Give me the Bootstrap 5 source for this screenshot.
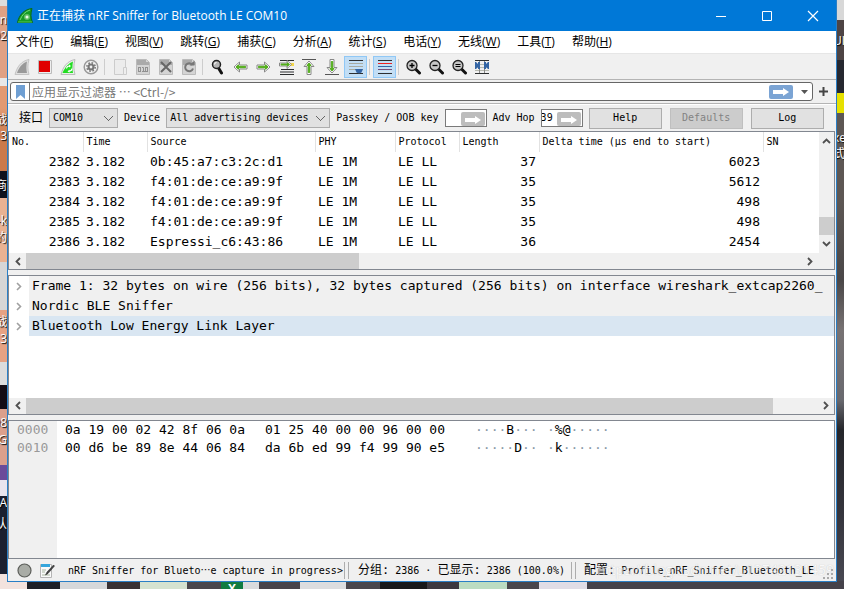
<!DOCTYPE html>
<html lang="zh-CN">
<head>
<meta charset="utf-8">
<meta name="viewport" content="width=device-width, initial-scale=1">
<title>nRF Sniffer for Bluetooth LE COM10</title>
<link href="https://cdn.jsdelivr.net/npm/bootstrap@5.3.0/dist/css/bootstrap.min.css" rel="stylesheet">
<style>
:root { --ui: "Open Sans", "Noto Sans CJK SC", sans-serif; --form: "DejaVu Sans Mono", "Noto Sans CJK SC", monospace; }
body { font-family: var(--ui); font-size: 12px; line-height: 16px; color: #000; overflow: hidden;
  background:
    linear-gradient(90deg, #f3e3de 0 27px, #1e2027 27px 60px, #d6d8da 60px 107px, #393133 107px 140px, #d5e2d0 140px 187px, #4a464c 187px 221px, #107c41 221px 243px, #dadbdd 243px 259px, #48434a 259px 300px, #dcdddf 300px 346px, #4a464c 346px 380px, #17181a 380px 427px, #3c383f 427px 459px, #bcdcc2 459px 507px, #4a464c 507px 539px, #e0dde6 539px 587px, #45424a 587px) bottom / 100% 8px no-repeat,
    linear-gradient(#d8d8d8 0 20px, #4d4444 20px 60px, #262830 60px 93px, #e6e000 93px 113px, #5d5754 113px 200px, #4a4748 280px, #777273 330px, #69696f 400px, #25262b 430px, #34343c 510px, #4a4a54) right / 8px 100% no-repeat,
    linear-gradient(#dddddd 0 6px, #e0a184 6px 78px, #e8e8e8 78px 86px, #e29a72 86px 108px, #cb7a4a 140px 171px, #10121c 171px 198px, #e9b292 198px 262px, #d6d6d6 262px 310px, #e6a283 310px 362px, #dcdcdc 362px 385px, #140c14 385px 409px, #dba08c 409px 465px, #6b4b9a 465px 480px, #e9e5ee 480px 496px, #1b2030 496px 574px, #f3e3de 574px) left / 8px 100% no-repeat, #444; }
.app-window { margin: 0 7px 7px 7px; border: 1px solid #2a7fc6; border-top: 0; background: #f0f0f0; height: calc(100vh - 7px); }
.edge-label { position: absolute; color: #fff; text-shadow: 1px 1px 1px #000; white-space: nowrap; font-size: 12px; }
.edge-left, .edge-right { position: absolute; top: 0; bottom: 0; width: 7px; overflow: hidden; }
.edge-left { left: 0; } .edge-right { right: 0; }
.edge-left .edge-label { right: 0; } .edge-right .edge-label { left: -4px; }
.edge-bottom { position: absolute; left: 221px; bottom: 0; width: 22px; height: 7px; overflow: hidden; color: #fff; font-weight: 700; line-height: 14px; text-align: center; }
button, select, input { font-family: inherit; color: inherit; }
button { background: none; border: 0; padding: 0; }
.title-bar { background: #0078d7; color: #fff; height: 31px; padding-left: 9px; }
.caption-btn { width: 46px; height: 31px; }
.menu-bar { background: #fff; height: 23px; border-bottom: 1px solid #e6e6e6; gap: 1px; }
.menu-bar a { color: #000; text-decoration: none; padding: 0 8px; white-space: nowrap; }
.tool-bar { height: 26px; padding-left: 2px; border-bottom: 1px solid #b4b4b4; }
.tool-btn { width: 23px; height: 22px; display: flex; align-items: center; justify-content: center; flex: none; }
.tool-btn.pressed { background: #c2def5; border: 1px solid #90c8f6; }
.tool-sep { width: 6px; height: 16px; flex: none; background: linear-gradient(#cdcdcd, #cdcdcd) 2px 0 / 1px 100% no-repeat; }
.filter-row { height: 24px; border-bottom: 1px solid #b4b4b4; padding: 0 8px 0 2px; gap: 2px; }
.filter-box { border: 1px solid #666; border-radius: 3px; background: #fff; height: 19px; }
.bookmark { width: 19px; border-right: 1px solid #777; }
.filter-box input { border: 0; outline: 0; background: none; font-family: "Noto Sans CJK SC", sans-serif; font-size: 12px; padding: 0 2px; height: 17px; min-width: 0; }
.filter-box input::placeholder { color: #777; opacity: 1; }
.iface-row { height: 27px; padding: 0 11px 0 11px; gap: 6px; font-family: var(--form); font-size: 10px; white-space: nowrap; border-top: 1px solid #fff; }
.iface-row .zh { font-size: 12px; }
.iface-row select { appearance: none; height: 20px; border: 1px solid #adadad; border-radius: 0; padding: 0 16px 1px 3px; font-size: 10px;
  background: linear-gradient(45deg, transparent 45%, #666 45% 58%, transparent 58%) right 8px center / 5px 5px no-repeat, linear-gradient(-45deg, transparent 45%, #666 45% 58%, transparent 58%) right 4px center / 5px 5px no-repeat, #e1e1e1; }
.sel-port { width: 69px; } .sel-dev { width: 164px; }
.key-box { width: 42px; height: 18px; border: 1px solid #7a7a7a; background: #fff; }
.key-box input { width: 14px; flex: 1; min-width: 0; border: 0; padding: 0; height: 16px; font-size: 10px; direction: rtl; }
.cmd-btn { width: 73px; height: 21px; border: 1px solid #adadad; background: #e1e1e1; }
.cmd-btn:disabled { background: #ccc; border-color: #bfbfbf; color: #838383; }
.pane { border: 1px solid #828790; background: #fff; margin-right: 1px; min-height: 0; font-family: "DejaVu Sans Mono", monospace; font-size: 13px; }
.pane-fill { flex: 1 1 0; }
.packet-list { table-layout: fixed; width: 100%; white-space: nowrap; }
.packet-list th { font-size: 10px; font-weight: 400; height: 20px; line-height: 20px; padding: 0 3px; border-right: 1px solid #e2e2e2; }
.packet-list th:last-child { border-right: 0; }
.packet-list td { height: 20px; line-height: 20px; padding: 0 3px; }
.c-no { width: 74px; } .c-64 { width: 64px; } .c-src { width: 168px; } .c-80 { width: 80px; } .c-delta { width: 224px; }
.packet-body { padding-bottom: 1px; }
.v-scroll { width: 15px; background: #f0f0f0; }
.h-scroll { height: 16px; background: #f0f0f0; }
.h-scroll button, .v-scroll button { width: 17px; height: 16px; display: flex; align-items: center; justify-content: center; flex: none; }
.v-scroll button { width: 15px; height: 18px; }
.thumb { background: #cdcdcd; }
.v-thumb { height: 18px; }
.split-gap { height: 5px; flex: none; }
.tree-row { height: 20px; line-height: 20px; white-space: pre; }
.tree-row button { width: 20px; flex: none; }
.tree-label { background: #f0f0f0; padding-left: 3px; overflow: hidden; }
.tree-row.current .tree-label { background: #d9e6f2; }
.hex-dump { white-space: pre; height: 100%; }
.hex-dump td, .hex-dump th { height: 18px; line-height: 18px; padding: 0; font-weight: 400; }
.hex-dump th { width: 48px; padding-left: 8px; background: #f0f0f0; color: #999; }
.hex-a { width: 208px; } .hex-dump td.hex-first { padding-left: 8px; } .hex-b { width: 210px; } .hex-c { width: 72px; }
.dot { color: #8a9aa8; }
.status-bar { height: 22px; font-family: var(--form); font-size: 10px; white-space: nowrap; padding-left: 9px; }
.status-bar .zh { font-size: 12px; }
.status-bar .wide-dots { font-family: "Noto Sans CJK SC", sans-serif; }
.status-msg { width: 278px; margin-left: 13px; margin-right: -2px; overflow: hidden; }
.status-sep { width: 5px; height: 17px; border: solid #adadad; border-width: 0 1px; flex: none; }
.status-count { width: 222px; padding-left: 9px; }
.watermark { position: absolute; right: 2px; top: 3px; font: 14px/16px "Open Sans", sans-serif; color: #fff; opacity: .55; text-shadow: 0 0 1px #999; }
.grip { position: absolute; right: 3px; bottom: 2px; }
</style>
<script src="https://cdn.jsdelivr.net/npm/bootstrap@5.3.0/dist/js/bootstrap.bundle.min.js"></script>
</head>
<body class="m-0 position-relative">
<div class="edge-left" aria-hidden="true">
  <span class="edge-label" style="top:12px">n</span><span class="edge-label" style="top:28px">02</span>
  <span class="edge-label" style="top:112px">战</span><span class="edge-label" style="top:128px">3</span>
  <span class="edge-label" style="top:178px">商</span><span class="edge-label" style="top:213px">-k</span><span class="edge-label" style="top:230px">的</span>
  <span class="edge-label" style="top:314px">战</span><span class="edge-label" style="top:331px">3</span>
  <span class="edge-label" style="top:415px">08</span><span class="edge-label" style="top:432px">G</span>
  <span class="edge-label" style="top:495px">RA</span><span class="edge-label" style="top:516px">认</span>
</div>
<div class="edge-right" aria-hidden="true">
  <span class="edge-label" style="top:33px">UI</span><span class="edge-label" style="top:130px">xe</span><span class="edge-label" style="top:146px">式</span>
</div>
<div class="edge-bottom" aria-hidden="true">X</div>

<div class="app-window d-flex flex-column">
  <header class="title-bar d-flex align-items-center flex-shrink-0">
    <svg width="16" height="16" viewBox="0 0 16 16"><path d="M.5 14.5C2 7 7 1.500 15 .5c-1.500 5-1.500 9 .5 14z" fill="#169b25" stroke="#0b6c18"/><path d="M3 12C5 7 8 3.500 13 2" stroke="#72d774" fill="none"/><path d="M1 14h14" stroke="#55ca57"/><circle cx="10" cy="9" r="3" fill="#62bd65"/><circle cx="10" cy="9" r="1.500" fill="#e8f8e5"/></svg>
    <span class="ms-1 flex-grow-1 text-truncate">正在捕获 nRF Sniffer for Bluetooth LE COM10</span>
    <button class="caption-btn" aria-label="最小化"><svg width="12" height="12"><path d="M1 6.500h10" stroke="#fff"/></svg></button>
    <button class="caption-btn" aria-label="最大化"><svg width="12" height="12"><path d="M1.500 1.500h9v9h-9z" fill="none" stroke="#fff"/></svg></button>
    <button class="caption-btn" aria-label="关闭"><svg width="12" height="12"><path d="M1 1l10 10M11 1L1 11" stroke="#fff" stroke-width="1.200"/></svg></button>
  </header>

  <nav class="menu-bar d-flex align-items-center flex-shrink-0" aria-label="菜单">
    <a href="#">文件(<u>F</u>)</a><a href="#">编辑(<u>E</u>)</a><a href="#">视图(<u>V</u>)</a><a href="#">跳转(<u>G</u>)</a><a href="#">捕获(<u>C</u>)</a><a href="#">分析(<u>A</u>)</a><a href="#">统计(<u>S</u>)</a><a href="#">电话(<u>Y</u>)</a><a href="#">无线(<u>W</u>)</a><a href="#">工具(<u>T</u>)</a><a href="#">帮助(<u>H</u>)</a>
  </nav>

  <div class="tool-bar d-flex align-items-center flex-shrink-0" role="toolbar" aria-label="工具栏">
    <button class="tool-btn" aria-label="开始捕获"><svg width="16" height="16"><path d="M1 15.500C3 8 7 2 15 .5c-1.500 5-1.500 10 0 15z" fill="#e0e0e0" stroke="#c4c4c4"/><path d="M3 14C5 8 9 4 13 2.500c-.8 4-.8 8 0 11.500z" fill="#999"/></svg></button>
    <button class="tool-btn" aria-label="停止捕获"><svg width="16" height="16"><path d="M1.500 1.500h13v13h-13z" fill="#eee" stroke="#bbb"/><path d="M2 2h11v11H2z" fill="#e00000"/></svg></button>
    <button class="tool-btn" aria-label="重新捕获"><svg width="16" height="16"><path d="M1 15.500C3 8 7 2 15 .5c-1.500 5-1.500 10 0 15z" fill="#e8f2e8" stroke="#bbb"/><path d="M2.500 14C5 8 9 4 13 2.500c-.8 4-.8 8 0 11.500z" fill="#23dc23"/><path d="M6.500 9.500a3 3 0 0 1 3-2.500M12 9.500a3 3 0 0 1-3 2.700" fill="none" stroke="#fff" stroke-width="1.200"/><path d="M9 5.500l2 1.500L9 8.500zM9.500 10.700l-2 1.500 2 1.500z" fill="#fff"/></svg></button>
    <button class="tool-btn" aria-label="捕获选项"><svg width="16" height="16"><circle cx="8" cy="8" r="6.800" fill="#f4f4f4" stroke="#999" stroke-width="1.500"/><circle cx="8" cy="8" r="3.500" fill="#777"/><circle cx="8" cy="8" r="4.200" fill="none" stroke="#777" stroke-width="1.500" stroke-dasharray="1.700 1.600"/><circle cx="8" cy="8" r="1.400" fill="#eee"/></svg></button>
    <span class="tool-sep"></span>
    <button class="tool-btn" aria-label="打开"><svg width="16" height="16"><path d="M2.500.5h11v15h-11z" fill="#ececec" stroke="#ccc"/><path d="M11.500 8.500h3v7h-3z" fill="#eee" stroke="#ccc"/></svg></button>
    <button class="tool-btn" aria-label="保存"><svg width="16" height="16"><path d="M1.500.5h10l3 3v12h-13z" fill="#d4d4d4" stroke="#bbb"/><path d="M2 1h9v2h3v3H2z" fill="#aaa"/><g fill="none" stroke="#909090"><rect x="3.500" y="8.500" width="2" height="4"/><path d="M7 8.500h1.500v4M7 12.500h3"/><rect x="10.500" y="8.500" width="2" height="4"/></g></svg></button>
    <button class="tool-btn" aria-label="关闭文件"><svg width="16" height="16"><path d="M1.500.5h10l3 3v12h-13z" fill="#d4d4d4" stroke="#bbb"/><path d="M2 1h9v2h3v3H2z" fill="#aaa"/><path d="M3 3l10 10M13 3L3 13" stroke="#666" stroke-width="2"/></svg></button>
    <button class="tool-btn" aria-label="重新加载"><svg width="16" height="16"><path d="M1.500.5h10l3 3v12h-13z" fill="#d4d4d4" stroke="#bbb"/><path d="M2 1h9v2h3v3H2z" fill="#aaa"/><path d="M11.500 6A4 4 0 1 0 12 9.500" fill="none" stroke="#777" stroke-width="2"/><path d="M8.500 6.500h5v-5z" fill="#777"/></svg></button>
    <span class="tool-sep"></span>
    <button class="tool-btn" aria-label="查找"><svg width="16" height="16"><path d="M8.500 9l3 5" stroke="#111" stroke-width="3" stroke-linecap="round"/><circle cx="6.500" cy="5.500" r="4" fill="#b5b5b5" stroke="#222" stroke-width="1.500"/><path d="M4.500 5.500a2 2 0 0 1 2-2" stroke="#fff" fill="none"/></svg></button>
    <button class="tool-btn" aria-label="上一分组"><svg width="16" height="16"><path d="M1 8L6.500 3v3H14v4H6.500v3z" fill="#fff" stroke="#888"/><path d="M3 8l2.500-2.200v1.500h7v1.400h-7v1.500z" fill="#52ad1b" stroke="#52ad1b"/></svg></button>
    <button class="tool-btn" aria-label="下一分组"><svg width="16" height="16"><path d="M14 8L8.500 3v3H1v4h7.500v3z" fill="#fff" stroke="#888"/><path d="M12 8L9.500 5.800v1.500h-7v1.400h7v1.500z" fill="#52ad1b" stroke="#52ad1b"/></svg></button>
    <button class="tool-btn" aria-label="转到分组"><svg width="16" height="16"><path d="M1 1.500h14M2 10.500h13M1 13h14M1 15.500h14" stroke="#2d2f30"/><path d="M11 4h4v3h-4z" fill="#f5d84a"/><path d="M12.500 5.500L8 1.500v2.500H.5v3H8v2.500z" fill="#fff" stroke="#888"/><path d="M10.500 5.500L8.500 3.800V5H2v1h6.500v1.200z" fill="#52ad1b" stroke="#52ad1b"/></svg></button>
    <button class="tool-btn" aria-label="第一个分组"><svg width="16" height="16"><path d="M0 .5h14" stroke="#555"/><path d="M7 2l5 5.500H9v8H5v-8H2z" fill="#fff" stroke="#888"/><path d="M7 4l2 2.500H7.700v7H6.300v-7H5z" fill="#52ad1b" stroke="#52ad1b"/></svg></button>
    <button class="tool-btn" aria-label="最后一个分组"><svg width="16" height="16"><path d="M0 15.500h14" stroke="#555"/><path d="M7 14l5-5.500H9v-8H5v8H2z" fill="#fff" stroke="#888"/><path d="M7 12l2-2.500H7.700v-7H6.300v7H5z" fill="#52ad1b" stroke="#52ad1b"/></svg></button>
    <button class="tool-btn pressed" aria-label="自动滚动" aria-pressed="true"><svg width="16" height="16"><path d="M1 1.500h14M1 14.500h14" stroke="#2d2f30"/><path d="M1 4.500h14M1 7.500h14M1 10.500h14" stroke="#a8aaa0"/><path d="M7 10h8l-1.500 3.500-2.500 1-2.500-1z" fill="#3465a4"/></svg></button>
    <span class="tool-sep"></span>
    <button class="tool-btn pressed" aria-label="着色" aria-pressed="true"><svg width="16" height="16"><path d="M1 1.500h14M1 14.500h14" stroke="#2d2f30"/><path d="M1 4h14v1H1z" fill="#ef2020"/><path d="M1 7h14v1H1z" fill="#3465a4"/><path d="M1 10h14v1H1z" fill="#75507b"/><path d="M1 12.500h14" stroke="#d8e4ee"/></svg></button>
    <span class="tool-sep"></span>
    <button class="tool-btn" aria-label="放大"><svg width="16" height="16"><path d="M9.500 10l4 4" stroke="#111" stroke-width="3" stroke-linecap="round"/><circle cx="6" cy="6.500" r="5" fill="#c6c6c6" stroke="#222" stroke-width="1.300"/><path d="M3.500 6.500h5M6 4v5" stroke="#000" stroke-width="1.300"/></svg></button>
    <button class="tool-btn" aria-label="缩小"><svg width="16" height="16"><path d="M9.500 10l4 4" stroke="#111" stroke-width="3" stroke-linecap="round"/><circle cx="6" cy="6.500" r="5" fill="#c6c6c6" stroke="#222" stroke-width="1.300"/><path d="M3.500 6.500h5" stroke="#000" stroke-width="1.300"/></svg></button>
    <button class="tool-btn" aria-label="正常大小"><svg width="16" height="16"><path d="M9.500 10l4 4" stroke="#111" stroke-width="3" stroke-linecap="round"/><circle cx="6" cy="6.500" r="5" fill="#c6c6c6" stroke="#222" stroke-width="1.300"/><path d="M3.500 5.500h5M3.500 7.500h5" stroke="#000"/></svg></button>
    <button class="tool-btn" aria-label="调整列宽"><svg width="16" height="16"><path d="M0 1.500h14M0 14.500h14" stroke="#2d2f30"/><path d="M0 5.500h14M0 8.500h14M0 11.500h14" stroke="#b8bab0"/><path d="M4.500 2v12M9.500 2v12" stroke="#888"/><path d="M0 3h1l2 2V3h2v7H3V8l-2 2H0zM14 3h-1l-2 2V3H9v7h2V8l2 2h1z" fill="#3465a4"/></svg></button>
  </div>

  <div class="filter-row d-flex align-items-center flex-shrink-0">
    <div class="filter-box d-flex align-items-center flex-grow-1">
      <button class="bookmark d-flex align-items-center justify-content-center h-100" aria-label="书签"><svg width="9" height="14"><path d="M0 0h9v14l-4.500-4L0 14z" fill="#6f9fd3"/></svg></button>
      <input class="flex-grow-1" type="text" aria-label="显示过滤器" placeholder="应用显示过滤器 ⋯ &lt;Ctrl-/&gt;" autofocus>
      <button class="d-flex" aria-label="应用过滤器"><svg width="24" height="14"><rect width="24" height="14" rx="2" fill="#7ba4d4"/><path d="M4 5h10V3l6 4-6 4V9H4z" fill="#fff"/></svg></button>
      <button class="d-flex px-1 ms-1" aria-label="过滤器历史"><svg width="7" height="4"><path d="M0 0h7L3.500 4z" fill="#555"/></svg></button>
    </div>
    <button class="d-flex ps-1" aria-label="添加过滤器按钮"><svg width="9" height="9"><path d="M4.500 0v9M0 4.500h9" stroke="#444" stroke-width="2"/></svg></button>
  </div>

  <form class="iface-row d-flex align-items-center flex-shrink-0 m-0">
    <label class="zh" for="port">接口</label>
    <select id="port" class="sel-port"><option>COM10</option></select>
    <label for="device">Device</label>
    <select id="device" class="sel-dev"><option>All advertising devices</option></select>
    <label for="passkey">Passkey / OOB key</label>
    <div class="key-box d-flex align-items-center"><input id="passkey" type="text"><button type="button" class="d-flex" aria-label="设置密钥"><svg width="25" height="15"><rect width="24" height="14" y="1" rx="2" fill="#bdbdbd"/><path d="M4 7h10V5l6 4-6 4v-2H4z" fill="#fff"/></svg></button></div>
    <label for="hop">Adv Hop</label>
    <div class="key-box d-flex align-items-center"><input id="hop" type="text" value="37,38,39" dir="rtl"><button type="button" class="d-flex ms-1" aria-label="设置跳频"><svg width="25" height="15"><rect width="24" height="14" y="1" rx="2" fill="#bdbdbd"/><path d="M4 7h10V5l6 4-6 4v-2H4z" fill="#fff"/></svg></button></div>
    <div class="d-flex gap-2">
      <button type="button" class="cmd-btn">Help</button>
      <button type="button" class="cmd-btn" disabled>Defaults</button>
      <button type="button" class="cmd-btn">Log</button>
    </div>
  </form>

  <section class="pane flex-shrink-0" aria-label="分组列表">
    <div class="d-flex">
      <div class="packet-body flex-grow-1 overflow-hidden">
        <table class="packet-list">
          <thead><tr><th class="c-no">No.</th><th class="c-64">Time</th><th class="c-src">Source</th><th class="c-80">PHY</th><th class="c-64">Protocol</th><th class="c-80">Length</th><th class="c-delta">Delta time (µs end to start)</th><th>SN</th></tr></thead>
          <tbody>
            <tr><td class="text-end">2382</td><td>3.182</td><td>0b:45:a7:c3:2c:d1</td><td>LE 1M</td><td>LE LL</td><td class="text-end">37</td><td class="text-end">6023</td><td></td></tr>
            <tr><td class="text-end">2383</td><td>3.182</td><td>f4:01:de:ce:a9:9f</td><td>LE 1M</td><td>LE LL</td><td class="text-end">35</td><td class="text-end">5612</td><td></td></tr>
            <tr><td class="text-end">2384</td><td>3.182</td><td>f4:01:de:ce:a9:9f</td><td>LE 1M</td><td>LE LL</td><td class="text-end">35</td><td class="text-end">498</td><td></td></tr>
            <tr><td class="text-end">2385</td><td>3.182</td><td>f4:01:de:ce:a9:9f</td><td>LE 1M</td><td>LE LL</td><td class="text-end">35</td><td class="text-end">498</td><td></td></tr>
            <tr><td class="text-end">2386</td><td>3.182</td><td>Espressi_c6:43:86</td><td>LE 1M</td><td>LE LL</td><td class="text-end">36</td><td class="text-end">2454</td><td></td></tr>
          </tbody>
        </table>
      </div>
      <div class="v-scroll d-flex flex-column">
        <button aria-label="向上"><svg width="9" height="6"><path d="M1 5l3.500-3.500L8 5" fill="none" stroke="#505050" stroke-width="1.800"/></svg></button>
        <div class="flex-grow-1"></div><div class="thumb v-thumb"></div>
        <button aria-label="向下"><svg width="9" height="6"><path d="M1 1l3.500 3.500L8 1" fill="none" stroke="#505050" stroke-width="1.800"/></svg></button>
      </div>
    </div>
    <div class="h-scroll d-flex pe-3">
      <button aria-label="向左"><svg width="6" height="9"><path d="M5 1L1.500 4.500 5 8" fill="none" stroke="#505050" stroke-width="1.800"/></svg></button>
      <div class="flex-grow-1"><div class="thumb h-100" style="width:43%"></div></div>
      <button aria-label="向右"><svg width="6" height="9"><path d="M1 1l3.500 3.500L1 8" fill="none" stroke="#505050" stroke-width="1.800"/></svg></button>
    </div>
  </section>
  <div class="split-gap"></div>

  <section class="pane pane-fill d-flex flex-column" aria-label="分组详情">
    <ul class="list-unstyled m-0 flex-grow-1 overflow-hidden">
      <li class="tree-row d-flex"><button aria-label="展开"><svg width="6" height="9"><path d="M1 1l3.500 3.500L1 8" fill="none" stroke="#a0a0a0" stroke-width="1.600"/></svg></button><span class="tree-label flex-grow-1">Frame 1: 32 bytes on wire (256 bits), 32 bytes captured (256 bits) on interface wireshark_extcap2260_</span></li>
      <li class="tree-row d-flex"><button aria-label="展开"><svg width="6" height="9"><path d="M1 1l3.500 3.500L1 8" fill="none" stroke="#a0a0a0" stroke-width="1.600"/></svg></button><span class="tree-label flex-grow-1">Nordic BLE Sniffer</span></li>
      <li class="tree-row current d-flex"><button aria-label="展开"><svg width="6" height="9"><path d="M1 1l3.500 3.500L1 8" fill="none" stroke="#a0a0a0" stroke-width="1.600"/></svg></button><span class="tree-label flex-grow-1">Bluetooth Low Energy Link Layer</span></li>
    </ul>
    <div class="h-scroll d-flex flex-shrink-0">
      <button aria-label="向左"><svg width="6" height="9"><path d="M5 1L1.500 4.500 5 8" fill="none" stroke="#505050" stroke-width="1.800"/></svg></button>
      <div class="flex-grow-1"><div class="thumb h-100" style="width:94.500%"></div></div>
      <button aria-label="向右"><svg width="6" height="9"><path d="M1 1l3.500 3.500L1 8" fill="none" stroke="#505050" stroke-width="1.800"/></svg></button>
    </div>
  </section>
  <div class="split-gap"></div>

  <section class="pane pane-fill overflow-hidden" aria-label="分组字节">
    <table class="hex-dump">
      <tbody>
        <tr><th scope="row">0000</th><td class="hex-a hex-first">0a 19 00 02 42 8f 06 0a</td><td class="hex-b">01 25 40 00 00 96 00 00</td><td class="hex-c"><span class="dot">····</span>B<span class="dot">···</span></td><td><span class="dot">·</span>%@<span class="dot">·····</span></td></tr>
        <tr><th scope="row">0010</th><td class="hex-first">00 d6 be 89 8e 44 06 84</td><td>da 6b ed 99 f4 99 90 e5</td><td><span class="dot">·····</span>D<span class="dot">··</span></td><td><span class="dot">·</span>k<span class="dot">······</span></td></tr>
        <tr class="h-100"><th></th><td colspan="4"></td></tr>
      </tbody>
    </table>
  </section>

  <footer class="status-bar d-flex align-items-center flex-shrink-0 position-relative">
    <svg width="15" height="15"><circle cx="7.500" cy="7.500" r="6.500" fill="#a9aca6" stroke="#5c5e5a" stroke-width="1.200"/></svg>
    <svg class="ms-2" width="15" height="15"><path d="M.5 1.500h11v13H.5z" fill="#fafafa" stroke="#b5b5b5"/><path d="M1 1h9v3H1z" fill="#36a6dc"/><path d="M2 7h4M2 9h3M2 12h8" stroke="#a8b6a0"/><path d="M13.500 2L7 9l-1.500 3L8 10.500 14.500 3z" fill="#444" stroke="#222" stroke-width=".5"/></svg>
    <span class="status-msg">nRF Sniffer for Blueto<span class="wide-dots">⋯</span>e capture in progress&gt;</span>
    <span class="status-sep"></span>
    <span class="status-count"><span class="zh">分组:</span> 2386 · <span class="zh">已显示:</span> 2386 (100.0%)</span>
    <span class="status-sep"></span>
    <span class="ps-2"><span class="zh">配置:</span> Profile_nRF_Sniffer_Bluetooth_LE</span>
    <span class="watermark">https://blog.csdn.net/u13742131459</span>
    <svg class="grip" width="10" height="10" fill="#aaa"><path d="M8 0h2v2H8zM4 4h2v2H4zM8 4h2v2H8zM0 8h2v2H0zM4 8h2v2H4zM8 8h2v2H8z"/></svg>
  </footer>
</div>
</body>
</html>
